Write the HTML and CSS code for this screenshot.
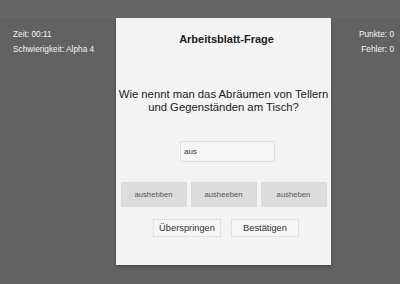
FILE: index.html
```html
<!DOCTYPE html>
<html lang="de">
<head>
    <meta charset="UTF-8">
    <meta name="viewport" content="width=device-width, initial-scale=1.0">
    <title>Arbeitsblatt</title>
    <link rel="stylesheet" href="styles.css">
</head>
<body>
    <div class="topbar"></div>
    <div class="stats">
        <div class="stats-left">
            <div>Zeit: 00:11</div>
            <div>Schwierigkeit: Alpha 4</div>
        </div>
        <div class="stats-right">
            <div>Punkte: 0</div>
            <div>Fehler: 0</div>
        </div>
    </div>

    <div class="modal">
        <h2 class="modal-title">Arbeitsblatt-Frage</h2>
        <p class="question">Wie nennt man das Abräumen von Tellern und Gegenständen am Tisch?</p>
        <input type="text" class="answer" value="aus">
        <div class="options">
            <button class="option">aushebben</button>
            <button class="option">ausheeben</button>
            <button class="option">ausheben</button>
        </div>
        <div class="actions">
            <button class="action">Überspringen</button>
            <button class="action">Bestätigen</button>
        </div>
    </div>
</body>
</html>
```
FILE: styles.css
```css
body {
    margin: 0;
    font-family: "Liberation Sans", Arial, sans-serif;
    background-color: #626262; /* abgedunkelter Hintergrund */
    color: #f2f2f2;
    height: 284px;
    overflow: hidden;
}
.topbar {
    height: 18px;
    background-color: #666;
}
.stats {
    display: flex;
    justify-content: space-between;
    padding: 9px 6px 0 13px;
    font-size: 8.3px;
    line-height: 15px;
}
.stats-right {
    text-align: right;
}
.modal {
    position: absolute;
    left: 116px;
    top: 18px;
    width: 215px;
    height: 247px;
    box-sizing: border-box;
    padding: 15px 0 0;
    background-color: #f3f3f3;
    box-shadow: 0 2px 3px rgba(0, 0, 0, 0.25);
    display: flex;
    flex-direction: column;
    align-items: center;
    color: #222;
}
.modal-title {
    margin: 0;
    font-size: 11px;
    line-height: 13px;
    font-weight: bold;
    padding-left: 6px;
}
.question {
    margin: 42px 0 0;
    font-size: 11.3px;
    line-height: 13.3px;
    text-align: center;
}
.answer {
    margin: 26px 0 0 8px;
    width: 95px;
    height: 21px;
    box-sizing: border-box;
    padding: 0 3px;
    border: 1px solid #dedede;
    border-radius: 2px;
    background-color: #f6f6f6;
    font-family: inherit;
    font-size: 8px;
    color: #333;
    outline: none;
}
.options {
    display: flex;
    gap: 4px;
    margin-top: 20px;
    width: 100%;
    justify-content: center;
}
.option {
    width: 66px;
    height: 25px;
    border: none;
    background-color: #dcdcdc;
    font-family: inherit;
    font-size: 7.7px;
    color: #555;
    padding: 0;
}
.actions {
    display: flex;
    gap: 10px;
    margin-top: 12px;
    padding-left: 5px;
}
.action {
    width: 68px;
    height: 18px;
    padding: 0;
    border: 1px solid #e2e2e2;
    background-color: #f6f6f6;
    font-family: inherit;
    font-size: 9.3px;
    color: #333;
}
```
